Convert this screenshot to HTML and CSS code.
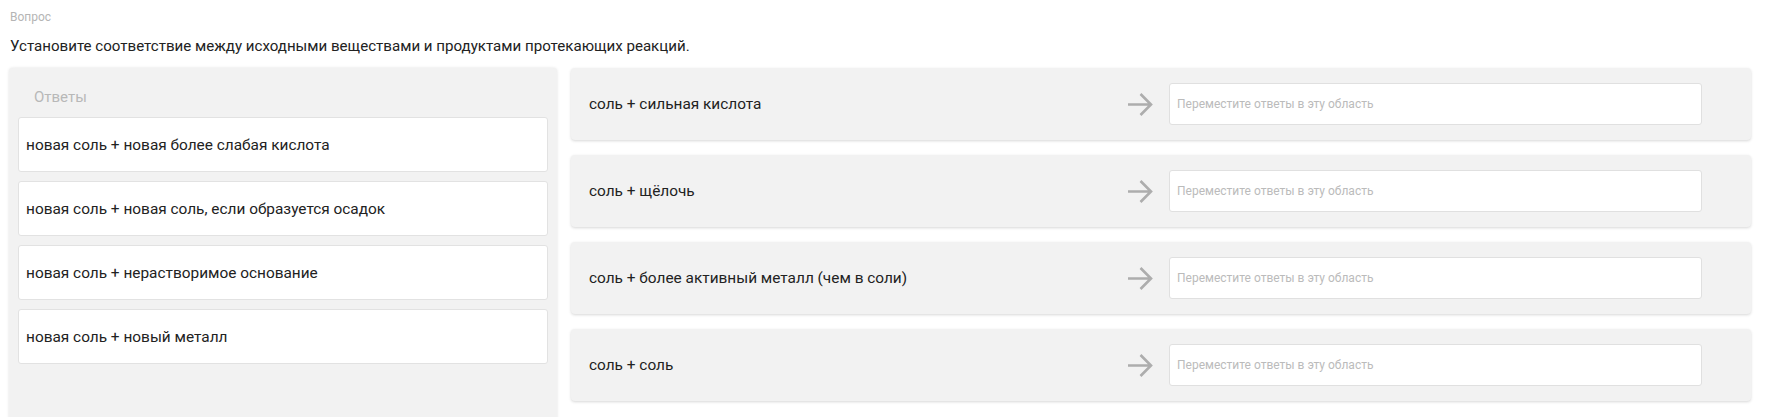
FILE: index.html
```html
<!doctype html>
<html>
<head>
<meta charset="utf-8">
<title>Вопрос</title>
<link rel="stylesheet" href="styles.css">
</head>

<body>
<div class="page">
    <div class="label">Вопрос</div>
    <div class="question">Установите соответствие между исходными веществами и продуктами протекающих реакций.</div>

    <div class="match">
        <div class="answers">
            <div class="answers-title">Ответы</div>
            <div class="card">новая соль + новая более слабая кислота</div>
            <div class="card">новая соль + новая соль, если образуется осадок</div>
            <div class="card">новая соль + нерастворимое основание</div>
            <div class="card">новая соль + новый металл</div>
        </div>

        <div class="rows">
            <div class="row">
                <div class="row-text">соль + сильная кислота</div>
                <svg class="arrow" width="26" height="25" viewBox="0 0 26 25"><path d="M1 12.5H24M13.5 2L24 12.5L13.5 23"/></svg>
                <div class="drop">Переместите ответы в эту область</div>
            </div>
            <div class="row">
                <div class="row-text">соль + щёлочь</div>
                <svg class="arrow" width="26" height="25" viewBox="0 0 26 25"><path d="M1 12.5H24M13.5 2L24 12.5L13.5 23"/></svg>
                <div class="drop">Переместите ответы в эту область</div>
            </div>
            <div class="row">
                <div class="row-text">соль + более активный металл (чем в соли)</div>
                <svg class="arrow" width="26" height="25" viewBox="0 0 26 25"><path d="M1 12.5H24M13.5 2L24 12.5L13.5 23"/></svg>
                <div class="drop">Переместите ответы в эту область</div>
            </div>
            <div class="row">
                <div class="row-text">соль + соль</div>
                <svg class="arrow" width="26" height="25" viewBox="0 0 26 25"><path d="M1 12.5H24M13.5 2L24 12.5L13.5 23"/></svg>
                <div class="drop">Переместите ответы в эту область</div>
            </div>
        </div>
    </div>
</div>
</body>
</html>
```

FILE: styles.css
```css
html,body { padding:0; margin:0; background:#fff;}
body { font-family: Roboto, "Liberation Sans", sans-serif; color:#222;}
.page { padding:10px 14px 0 9px;}
.label { font-size:12px; line-height:14px; color:#b5b5b5; padding-left:1px;}
.question { font-size:15.1px; line-height:20px; margin-top:12px; padding-left:1px;}

.match { display:flex; align-items:flex-start; margin-top:12px;}
.answers { width:548px; height:370px; box-sizing:border-box; padding:18px 9px 0; background:#f2f2f2; border-radius:4px; box-shadow:0 0 3px rgba(0,0,0,0.12);}
.answers-title { font-size:15px; line-height:22px; color:#b8b8b8; padding-left:16px; margin-bottom:9px;}
.card { height:55px; box-sizing:border-box; display:flex; align-items:center; padding:0 7px; margin-bottom:9px; background:#fff; border:1px solid #e2e2e2; border-radius:3px; font-size:15.4px;}

.rows { flex:1; margin-left:14px;}
.row { height:72px; box-sizing:border-box; display:flex; align-items:center; padding:0 49px 0 18px; margin-bottom:15px; background:#f2f2f2; border-radius:4px; box-shadow:0 1px 3px rgba(0,0,0,0.16);}
.row-text { flex:1; font-size:15.4px;}
.arrow { margin-right:16px; flex:none;}
.arrow path { fill:none; stroke:#adadad; stroke-width:2.6;}
.drop { width:533px; height:42px; box-sizing:border-box; display:flex; align-items:center; padding:0 7px; background:#fff; border:1px solid #e0e0e0; border-radius:3px; font-size:12px; color:#bbb;}
```
